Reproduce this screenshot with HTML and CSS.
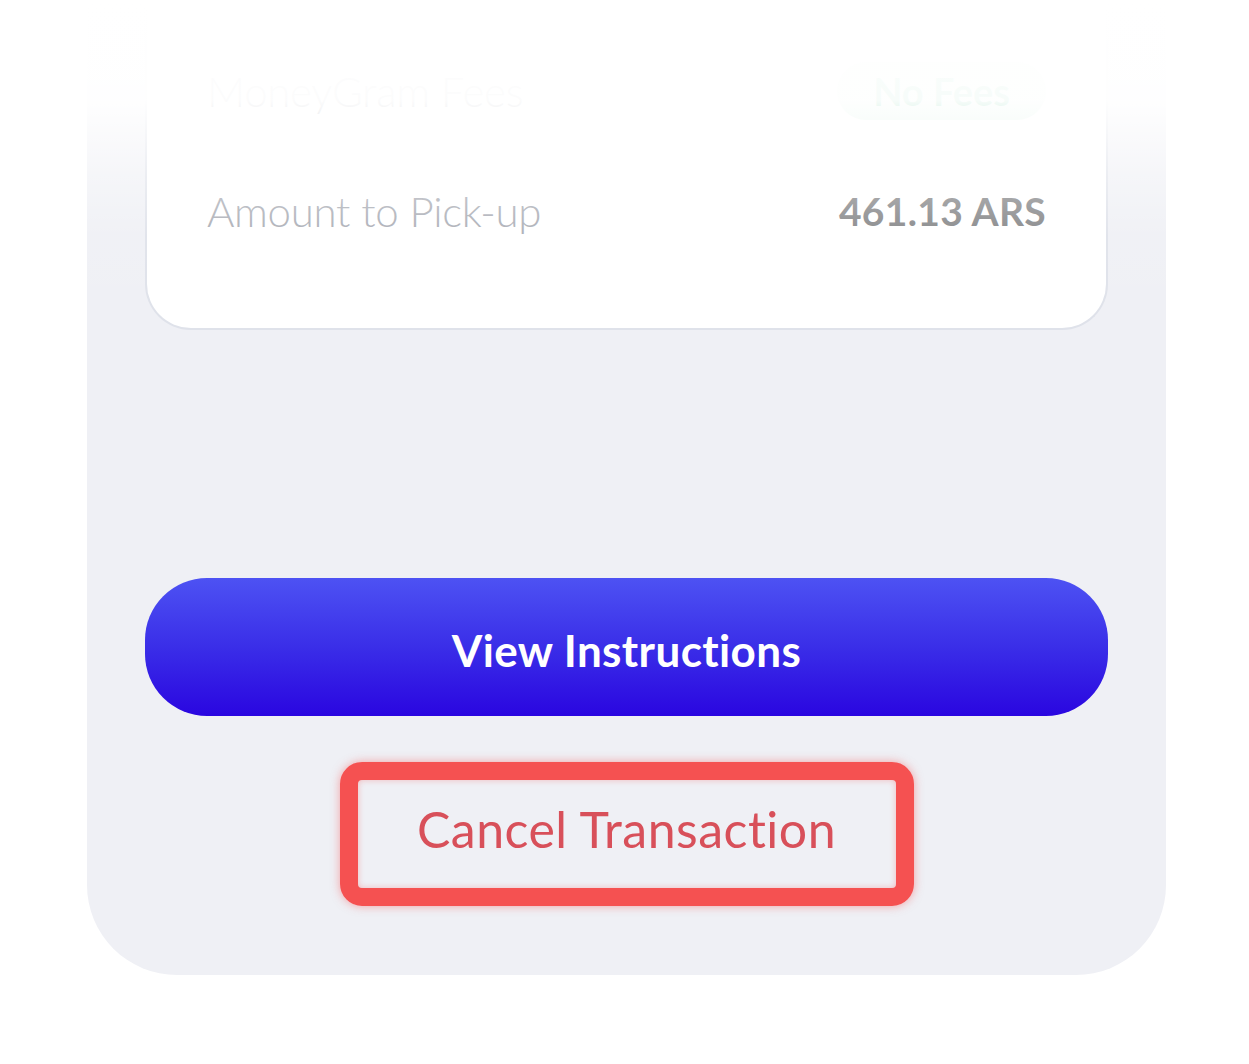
FILE: index.html
```html
<!DOCTYPE html>
<html>
  <head>
    <title>Transfer Details</title>
    <meta name="viewport" content="width=device-width, initial-scale=1">
    <link rel="stylesheet" href="styles.css">
  </head>
  <body>
    <div class="screen">
      <div class="summary-card">
        <div class="summary-row">
          <span class="row-label">MoneyGram Fees</span>
          <span class="fee-pill">No Fees</span>
        </div>
        <div class="summary-row">
          <span class="row-label">Amount to Pick-up</span>
          <span class="row-value">461.13 ARS</span>
        </div>
      </div>

      <button class="primary-btn" type="button">View Instructions</button>

      <div class="cancel-wrap">
        <div class="cancel-highlight">
          <button class="cancel-btn" type="button">Cancel Transaction</button>
        </div>
      </div>

      <div class="top-fade"></div>
    </div>
  </body>
</html>
```

FILE: styles.css
```css
body {
  margin: 0;
  background-color: #fff;
  font-family: Lato, "Noto Sans", sans-serif;
}

.screen {
  position: relative;
  width: 1079px;
  margin-left: 87px;
  padding: 0 58px 69px;
  box-sizing: border-box;
  background-color: #eff0f5;
  border-radius: 0 0 90px 90px;
  display: flex;
  flex-direction: column;
}

.summary-card {
  background-color: #fff;
  border: 2px solid #dfe2ea;
  border-top: none;
  border-radius: 0 0 46px 46px;
  padding: 61px 60px 87px;
  display: flex;
  flex-direction: column;
  gap: 60px;
}

.summary-row {
  height: 60px;
  display: flex;
  align-items: center;
  justify-content: space-between;
}

.row-label {
  font-size: 42px;
  font-weight: 300;
  color: #a9acb4;
  letter-spacing: -0.3px;
}

.row-value {
  font-size: 39px;
  font-weight: 700;
  color: #838486;
  letter-spacing: 0.3px;
}

.fee-pill {
  background-color: #dff5ea;
  color: #2fb878;
  font-size: 38px;
  font-weight: 700;
  padding: 6px 36px;
  border-radius: 30px;
}

.primary-btn {
  margin-top: 248px;
  height: 138px;
  width: 100%;
  padding-top: 6px;
  border: none;
  border-radius: 62px;
  background: linear-gradient(180deg, #4d52f3 0%, #3a2ee8 50%, #2a06e0 100%);
  color: #fff;
  font-family: inherit;
  font-size: 44px;
  font-weight: 700;
  letter-spacing: 0.4px;
  cursor: pointer;
}

.cancel-wrap {
  display: flex;
  justify-content: center;
  margin-top: 46px;
}

.cancel-highlight {
  width: 574px;
  height: 144px;
  box-sizing: border-box;
  padding-bottom: 10px;
  border: 18px solid #f55151;
  border-radius: 22px;
  box-shadow: 0 0 10px rgba(245, 81, 81, 0.5), inset 0 0 6px rgba(245, 81, 81, 0.35);
  display: flex;
  align-items: center;
  justify-content: center;
}

.cancel-btn {
  background: none;
  border: none;
  color: #d8505a;
  font-family: inherit;
  font-size: 50px;
  font-weight: 400;
  letter-spacing: 0.5px;
  cursor: pointer;
}

/* scroll fade at the top of the sheet */
.top-fade {
  position: absolute;
  left: -2px;
  right: -2px;
  top: 0;
  height: 330px;
  background: linear-gradient(180deg, #fff 0px, rgba(255, 255, 255, 0.96) 100px, rgba(255, 255, 255, 0.4) 175px, rgba(255, 255, 255, 0.08) 235px, rgba(255, 255, 255, 0) 320px);
  pointer-events: none;
}
```
